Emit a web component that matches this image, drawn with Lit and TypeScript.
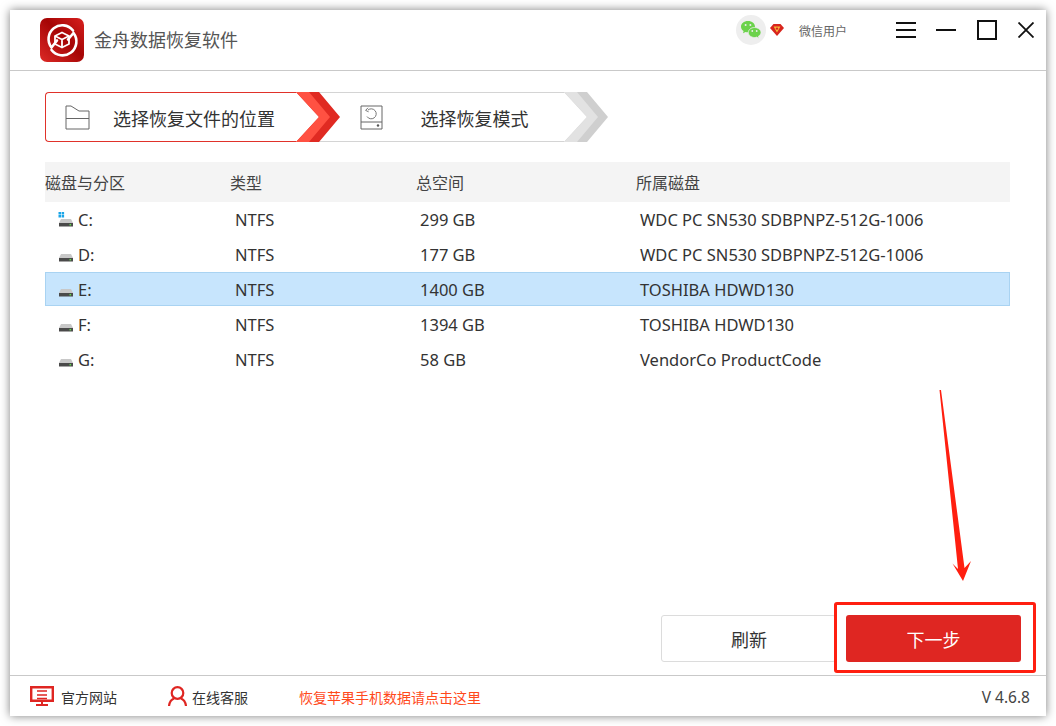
import { LitElement, html, css, svg } from "lit";
import { customElement } from "lit/decorators.js";

const rows = [
  { d: "C:", fs: "NTFS", size: "299 GB", disk: "WDC PC SN530 SDBPNPZ-512G-1006", sys: true },
  { d: "D:", fs: "NTFS", size: "177 GB", disk: "WDC PC SN530 SDBPNPZ-512G-1006" },
  { d: "E:", fs: "NTFS", size: "1400 GB", disk: "TOSHIBA HDWD130", sel: true },
  { d: "F:", fs: "NTFS", size: "1394 GB", disk: "TOSHIBA HDWD130" },
  { d: "G:", fs: "NTFS", size: "58 GB", disk: "VendorCo ProductCode" },
];

const chevron = (light: string, dark: string) => html`
  <svg class="chev" width="44" height="50" viewBox="0 0 44 50">
    <polygon points="0,0 23,0 44,25 23,50 0,50 23,25" fill="${dark}"></polygon>
    <polygon points="0,0 13,0 34,25 13,50 0,50 23,25" fill="${light}"></polygon>
  </svg>`;

const drive = (sys?: boolean) => html`
  <svg class="drive" width="16" height="16" viewBox="0 0 16 16">
    ${sys ? svg`<g fill="#1aa5e8"><rect x="0.5" y="0" width="2.5" height="2.5"></rect><rect x="3.6" y="0" width="2.5" height="2.5"></rect><rect x="0.5" y="3" width="2.5" height="2.5"></rect><rect x="3.6" y="3" width="2.5" height="2.5"></rect></g>` : ""}
    <path d="M3 7 H13 L15 11 H1 Z" fill="#c8c8c8"></path>
    <path d="M1 11 H15 V14.5 H1 Z" fill="#4a4a4a"></path>
    <rect x="11.5" y="12" width="1.6" height="1.4" fill="#5fe04a"></rect>
  </svg>`;

@customElement("app-root")
export class AppRoot extends LitElement {
  static styles = css`
    :host {
      display: block;
      width: 1056px;
      height: 726px;
      box-sizing: border-box;
      padding: 10px;
      background: #fff;
      font-family: "Noto Sans CJK SC", "Noto Sans", sans-serif;
      color: #333;
    }
    .win {
      position: relative;
      width: 1036px;
      height: 706px;
      background: #fff;
      display: flex;
      flex-direction: column;
      box-shadow: 0 0 9px rgba(0, 0, 0, 0.5);
    }
    header {
      height: 61px;
      box-sizing: border-box;
      border-bottom: 1px solid #c9c9c9;
      display: flex;
      align-items: center;
      padding: 0 12px 0 30px;
      flex: none;
    }
    .logo { display: block; }
    .title { margin-left: 10px; font-size: 18px; color: #555; margin-top: -2px; }
    .user {
      margin-left: auto;
      display: flex;
      align-items: center;
      align-self: flex-start;
      margin-top: 5px;
    }
    .wx {
      width: 30px;
      height: 30px;
      border-radius: 50%;
      background: #eee;
      display: flex;
      align-items: center;
      justify-content: center;
    }
    .badge { margin-left: 4px; }
    .uname { font-size: 12px; color: #666; margin-left: 15px; width: 48px; margin-right: 49px; }
    .ctrls { display: flex; align-items: center; gap: 20px; align-self: flex-start; margin-top: 10px; }
    .ctrls svg { display: block; }
    .ctrls .wide { margin-left: 1px; }
    main {
      flex: 1;
      display: flex;
      flex-direction: column;
      padding: 21px 0 0 35px;
      min-height: 0;
    }
    .steps { display: flex; height: 50px; width: 563px; flex: none; }
    .step {
      box-sizing: border-box;
      height: 50px;
      display: flex;
      align-items: center;
      background: #fff;
      font-size: 18px;
      color: #333;
    }
    .step svg { display: block; }
    .label { padding-top: 2px; }
    .step.one {
      width: 252px;
      border: 1px solid #e0322a;
      border-right: none;
      border-radius: 4px 0 0 4px;
      padding-left: 19px;
    }
    .step.two {
      width: 245px;
      margin-left: -21px;
      border-top: 1px solid #d4d4d4;
      border-bottom: 1px solid #d4d4d4;
      padding-left: 41px;
    }
    .step.two .label { margin-left: 37px; }
    .step.one .label { margin-left: 23px; }
    .chev { display: block; flex: none; position: relative; z-index: 1; }
    .table { margin: 20px 36px 0 0; flex: none; }
    .grid { display: grid; align-items: center; }
    .head { grid-template-columns: 185px 186px 220px 1fr; height: 40px; background: #f4f4f4; font-size: 16px; color: #444; }
    .row {
      grid-template-columns: 184px 186px 220px 1fr;
      box-sizing: border-box;
      height: 34px;
      margin-bottom: 1px;
      border: 1px solid transparent;
      font-family: "Noto Sans", "Noto Sans CJK SC", sans-serif;
      font-size: 16.5px;
      color: #333;
      padding-top: 1px;
    }
    .row.sel { background: #c7e5fd; border-color: #a9d3f2; }
    .row > span { padding-left: 5px; }
    .row > span:nth-child(3) { padding-left: 4px; }
    .row > span:nth-child(4) { padding-left: 4px; }
    .row > span.drv { padding-left: 12px; display: flex; align-items: center; gap: 4px; }
    .drive { display: block; flex: none; }
    .actions {
      margin-top: auto;
      display: flex;
      justify-content: flex-end;
      align-items: flex-start;
      padding-right: 10px;
      padding-bottom: 2px;
    }
    .btn {
      width: 175px;
      height: 47px;
      box-sizing: border-box;
      border-radius: 3px;
      display: flex;
      align-items: center;
      justify-content: center;
      font-size: 18px;
    }
    .btn.ghost { border: 1px solid #dcdcdc; margin-top: 13px; margin-right: -2px; color: #333; padding-left: 1px; }
    .btn.primary { background: #df2622; color: #fff; }
    .mark {
      position: relative;
      background: #fff;
      border: 3px solid #ff1f10;
      border-radius: 3px;
      padding: 10px 12px 8px 9px;
    }
    footer {
      height: 41px;
      flex: none;
      box-sizing: border-box;
      border-top: 1px solid #c9c9c9;
      display: flex;
      align-items: center;
      padding: 0 16px 0 20px;
      font-size: 14px;
      color: #333;
    }
    .link { display: flex; align-items: center; }
    .link svg { display: block; }
    .link span, .apple { padding-top: 2px; }
    .site span { margin-left: 7px; }
    .service { margin-left: 51px; }
    .service span { margin-left: 5px; }
    .apple { margin-left: 51px; color: #ff4a1c; }
    .ver { margin-left: auto; font-family: "Noto Sans", sans-serif; font-size: 15.5px; color: #444; padding-top: 2px; }
    .arrow { position: absolute; left: 918px; top: 370px; display: block; }
  `;

  render() {
    return html`
      <div class="win">
        <header>
          <svg class="logo" width="44" height="44" viewBox="0 0 44 44">
            <defs>
              <linearGradient id="lg" x1="1" y1="0" x2="0" y2="1">
                <stop offset="0" stop-color="#d8201e"></stop>
                <stop offset="0.45" stop-color="#a50505"></stop>
                <stop offset="1" stop-color="#dd2a26"></stop>
              </linearGradient>
            </defs>
            <rect width="44" height="44" rx="7" fill="url(#lg)"></rect>
            <g fill="none" stroke="#fff" stroke-width="2.6" stroke-linecap="round">
              <path d="M33 12.5 A13 13 0 0 0 11.5 29.5 L17 22.5"></path>
              <path d="M11.5 32 A13 13 0 0 0 33.5 15 L28 21.5"></path>
            </g>
            <g fill="none" stroke="#fff" stroke-width="1.8" stroke-linejoin="round">
              <path d="M22 14.5 L29 18 V26 L22 29.5 L15 26 V18 Z"></path>
              <path d="M15 18 L22 21.5 L29 18 M22 21.5 V29.5"></path>
            </g>
          </svg>
          <div class="title">金舟数据恢复软件</div>
          <div class="user">
            <div class="wx">
              <svg width="22" height="20" viewBox="0 0 22 20">
                <path d="M8 1 C3.8 1 1 3.6 1 6.7 C1 8.6 2 10 3.6 11.1 L3 13.2 L5.5 11.9 C6.4 12.2 7.3 12.3 8.2 12.3 C13 12.3 15 9 15 6.7 C15 3.6 12.2 1 8 1 Z" fill="#6cd24c"></path>
                <path d="M14.5 7.5 C11 7.5 8.3 9.8 8.3 12.5 C8.3 15.2 11 17.5 14.5 17.5 C15.2 17.5 16 17.4 16.7 17.1 L19 18.5 L18.4 16.3 C20 15.3 21 14 21 12.5 C21 9.8 18 7.5 14.5 7.5 Z" fill="#6cd24c" stroke="#eee" stroke-width="0.8"></path>
                <circle cx="5.6" cy="5" r="1" fill="#eee"></circle>
                <circle cx="10.4" cy="5" r="1" fill="#eee"></circle>
                <circle cx="12.3" cy="11" r="0.9" fill="#eee"></circle>
                <circle cx="16.7" cy="11" r="0.9" fill="#eee"></circle>
              </svg>
            </div>
            <svg class="badge" width="14" height="12" viewBox="0 0 14 12">
              <path d="M3.5 0 H10.5 L14 4 L7 12 L0 4 Z" fill="#d8251d"></path>
              <path d="M3.6 2.6 H10.4 L7 8.6 Z" fill="#f7b93c"></path>
              <circle cx="7" cy="4.6" r="1.2" fill="#d8251d"></circle>
            </svg>
            <div class="uname">微信用户</div>
          </div>
          <div class="ctrls">
            <svg width="20" height="16" viewBox="0 0 20 16"><path d="M0 1 H20 M0 8 H20 M0 15 H20" stroke="#111" stroke-width="2"></path></svg>
            <svg width="20" height="16" viewBox="0 0 20 16"><path d="M0 8 H20" stroke="#111" stroke-width="2"></path></svg>
            <svg class="wide" width="20" height="20" viewBox="0 0 20 20"><rect x="1" y="1" width="18" height="18" fill="none" stroke="#111" stroke-width="2"></rect></svg>
            <svg class="wide" width="16" height="16" viewBox="0 0 16 16"><path d="M0.5 0.5 L15.5 15.5 M15.5 0.5 L0.5 15.5" stroke="#111" stroke-width="1.8"></path></svg>
          </div>
        </header>
        <main>
          <div class="steps">
            <div class="step one">
              <svg width="25" height="25" viewBox="0 0 25 25">
                <path d="M1 24 V1 H6 L14 6 H24 V24 Z M1 13.5 H24" fill="none" stroke="#666" stroke-width="1"></path>
              </svg>
              <span class="label">选择恢复文件的位置</span>
            </div>
            ${chevron("#ff5142", "#e02a22")}
            <div class="step two">
              <svg width="23" height="25" viewBox="0 0 23 25">
                <path d="M1 1 H22 V24 H1 Z M1 17 H22" fill="none" stroke="#666" stroke-width="1"></path>
                <path d="M8 5 A5 5 0 1 1 7 11.5 M8 2.8 L5.6 5.4 L8.6 6.8" fill="none" stroke="#777" stroke-width="1"></path>
                <circle cx="18" cy="20.5" r="1.2" fill="#555"></circle>
              </svg>
              <span class="label">选择恢复模式</span>
            </div>
            ${chevron("#e2e2e2", "#cfcfcf")}
          </div>
          <div class="table">
            <div class="grid head"><span>磁盘与分区</span><span>类型</span><span>总空间</span><span>所属磁盘</span></div>
            ${rows.map(
              (r) => html`<div class="grid row ${r.sel ? "sel" : ""}">
                <span class="drv">${drive(r.sys)}${r.d}</span>
                <span>${r.fs}</span><span>${r.size}</span><span>${r.disk}</span>
              </div>`
            )}
          </div>
          <div class="actions">
            <div class="btn ghost">刷新</div>
            <div class="mark"><div class="btn primary">下一步</div></div>
          </div>
        </main>
        <footer>
          <div class="link site">
            <svg width="24" height="20" viewBox="0 0 24 20">
              <path d="M1.2 1.2 H22.8 V14.8 H1.2 Z" fill="none" stroke="#df2622" stroke-width="2.4"></path>
              <path d="M7 5 H17 M7 9 H17 M7 12.5 H17" stroke="#df2622" stroke-width="1.6" fill="none"></path>
              <path d="M11 15 H13 V18 H11 Z M6 18 H18 V20 H6 Z" fill="#df2622"></path>
            </svg>
            <span>官方网站</span>
          </div>
          <div class="link service">
            <svg width="19" height="20" viewBox="0 0 19 20">
              <circle cx="9.5" cy="7" r="5.8" fill="none" stroke="#df2622" stroke-width="2.2"></circle>
              <path d="M1 20 C1.5 16 3.5 13.5 6 12.5 M18 20 C17.5 16 15.5 13.5 13 12.5" fill="none" stroke="#df2622" stroke-width="2.2"></path>
            </svg>
            <span>在线客服</span>
          </div>
          <div class="apple">恢复苹果手机数据请点击这里</div>
          <div class="ver">V 4.6.8</div>
        </footer>
        <svg class="arrow" width="45" height="205" viewBox="928 380 45 205">
          <polygon points="939.5,390 941,390 964.5,568 971,561 963,581 952.5,563.5 958,569" fill="#ff1f10"></polygon>
        </svg>
      </div>
    `;
  }
}
